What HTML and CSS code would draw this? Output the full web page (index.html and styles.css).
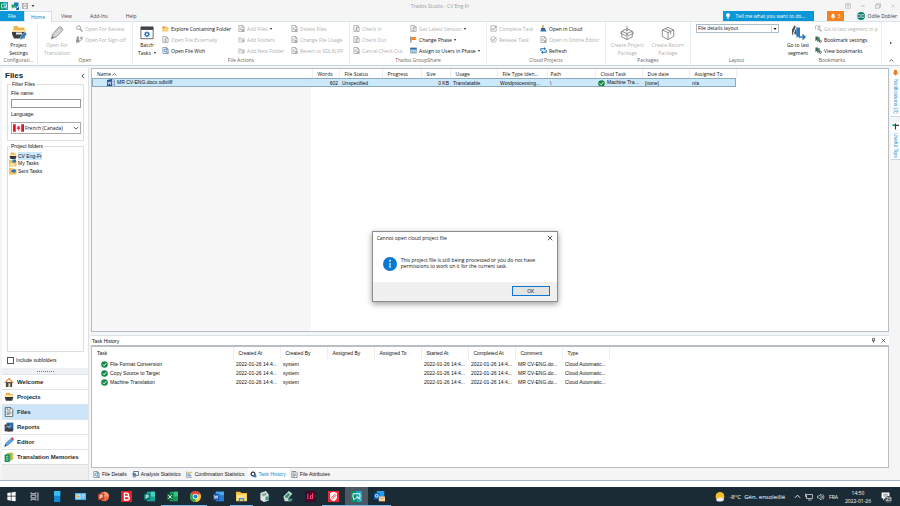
FILE: index.html
```html
<!DOCTYPE html>
<html lang="en">
<head>
<meta charset="utf-8">
<title>Trados Studio - CV Eng-Fr</title>
<link rel="stylesheet" href="styles.css">
</head>
<body>
<svg class="defs" aria-hidden="true">
  <symbol id="doc" viewBox="0 0 16 16"><path d="M2 1h8l4 4v10H2zM10 1v4h4" fill="#fafafa" stroke="currentColor" stroke-width="1.5"/><path d="M4 7h5M4 10h4" stroke="currentColor" stroke-width="1.4"/><path d="M8 12h6M11 9v6" stroke="currentColor" stroke-width="2"/></symbol>
  <symbol id="doc-x" viewBox="0 0 16 16"><path d="M2 1h8l4 4v10H2zM10 1v4h4" fill="#fafafa" stroke="currentColor" stroke-width="1.5"/><path d="M4 7h5M4 10h3" stroke="currentColor" stroke-width="1.4"/><path d="M8 9l6 6M14 9l-6 6" stroke="currentColor" stroke-width="2"/></symbol>
  <symbol id="doc-arrow" viewBox="0 0 16 16"><path d="M2 1h8l4 4v10H2zM10 1v4h4" fill="#fafafa" stroke="currentColor" stroke-width="1.5"/><path d="M8 12V6M5 8l3-3 3 3M5 12h6" stroke="currentColor" stroke-width="1.6" fill="none"/></symbol>
  <symbol id="doc-search" viewBox="0 0 16 16"><path d="M2 1h8l4 4v10H2zM10 1v4h4" fill="#fff" stroke="#687078" stroke-width="1.5"/><circle cx="8" cy="8" r="3.4" fill="#d8ebfa" stroke="#2679c4" stroke-width="1.7"/><path d="M10 11l4 4" stroke="#2679c4" stroke-width="2"/></symbol>
  <symbol id="folder" viewBox="0 0 16 16"><path d="M1 3h5l2 2h6v9H1z" fill="#e2a63a"/><path d="M1 14l3-7h12l-3 7z" fill="#ffd173"/></symbol>
  <symbol id="folder-off" viewBox="0 0 16 16"><path d="M1 3h5l2 2h6v9H1z" fill="#ccc"/><path d="M1 14l3-7h12l-3 7z" fill="#eee" stroke="#aaa"/><path d="M9 11h6M12 8v6" stroke="#888" stroke-width="1.5"/></symbol>
  <symbol id="magnifier" viewBox="0 0 16 16"><circle cx="6" cy="6" r="4.5" fill="none" stroke="currentColor" stroke-width="1.8"/><path d="M9 9l6 6" stroke="currentColor" stroke-width="2.6"/></symbol>
  <symbol id="signoff" viewBox="0 0 16 16"><circle cx="4" cy="4" r="3" fill="currentColor"/><path d="M0 15V10q0-3 4-3t4 3v5z" fill="currentColor"/><path d="M9 3h7M9 6h6M10 12l5-6" stroke="currentColor" stroke-width="1.8"/></symbol>
  <symbol id="check-box" viewBox="0 0 16 16"><path d="M2 2h12v12H2z" fill="none" stroke="currentColor" stroke-width="1.5"/><path d="M4 7l3 4 8-9" fill="none" stroke="currentColor" stroke-width="2"/></symbol>
  <symbol id="check-circle" viewBox="0 0 16 16"><circle cx="8" cy="8" r="6.5" fill="none" stroke="currentColor" stroke-width="1.4"/><path d="M4 7l3 4 6-7" fill="none" stroke="currentColor" stroke-width="2"/></symbol>
  <symbol id="ok" viewBox="0 0 16 16"><circle cx="8" cy="8" r="7.5" fill="#138744"/><path d="M4 8l3 3 5-6" fill="none" stroke="#fff" stroke-width="2.2"/></symbol>
  <symbol id="flag" viewBox="0 0 16 16"><path d="M2 1v14" stroke="#555" stroke-width="2"/><path d="M3 2h12l-3 3 3 4H3z" fill="#f5821f"/></symbol>
  <symbol id="phase" viewBox="0 0 16 16"><path d="M1 2h14v12H1z" fill="#dcebf7" stroke="#4b6f92"/><path d="M1 2h14v4H1z" fill="#2a6db0"/><path d="M3 9h4M9 9h4M3 12h10" stroke="#477da8" stroke-width="1.5"/></symbol>
  <symbol id="cloud-user" viewBox="0 0 16 16"><circle cx="7" cy="3" r="2.5" fill="#e8a62c"/><path d="M2 8q0-2 5-2t5 2v3H2z" fill="#3f4a57"/><path d="M1 15q-1-4 3-4 2-3 5-1 4-1 6 5z" fill="#2673bd"/></symbol>
  <symbol id="refresh" viewBox="0 0 16 16"><path d="M2 9V4h9M14 7v5H5" fill="none" stroke="#2577bf" stroke-width="2.5"/><path d="M9 0l5 4-5 4zM7 8l-5 4 5 4z" fill="#2577bf"/></symbol>
  <symbol id="project" viewBox="0 0 32 32"><path d="M5 2h8l2 3h12v8H5z" fill="#f0b64b"/><path d="M2 10h28v4H2z" fill="#ffe0a0"/><path d="M2 14h28v4l-3 9H6l-4-9z" fill="#3c4043"/><path d="M10 15h12v4H10z" fill="#eee"/><path d="M18 30l1-6 9-10 4 4-9 10z" fill="#2577bf" stroke="#fff"/></symbol>
  <symbol id="pencil" viewBox="0 0 32 32"><path d="M3 29l3-11L20 3q3-3 7 1t1 7L14 25z" fill="#bbb" stroke="#888" stroke-width="2"/><path d="M9 20L23 7M12 23L26 9" stroke="#eee" stroke-width="2"/><path d="M3 29l2-6 4 4z" fill="#666"/></symbol>
  <symbol id="batch" viewBox="0 0 32 32"><path d="M2 2h28v27H2z" fill="#fff" stroke="#55585c" stroke-width="2"/><path d="M2 2h28v7H2z" fill="#414448"/><circle cx="16" cy="19" r="4" fill="none" stroke="#2670b8" stroke-width="3"/><path d="M16 12v3M16 23v3M9 19h3M20 19h3M11 14l2 2M19 22l2 2M21 14l-2 2M13 22l-2 2" stroke="#2670b8" stroke-width="2"/></symbol>
  <symbol id="package" viewBox="0 0 32 32"><path d="M4 12l12 5 12-5v13l-12 6-12-6zM16 17v14M4 12l12-6 12 6" fill="none" stroke="#777" stroke-width="2.2"/><path d="M4 12l-3 5 12 5 3-5 3 5 12-5-3-5M16 0v11M11 7l5 5 5-5" fill="none" stroke="#777" stroke-width="2"/></symbol>
  <symbol id="package-return" viewBox="0 0 32 32"><path d="M3 9l13-6 13 6v15l-13 7-13-7zM3 9l13 6 13-6M16 15v16M9 6l13 6v7" fill="none" stroke="#777" stroke-width="2.2"/></symbol>
  <symbol id="goto" viewBox="0 0 32 32"><path d="M4 21V9l5-8 4 3v17l-4-4z" fill="#4b5055"/><path d="M6 19L13 2" stroke="#fff" stroke-width="2"/><path d="M13 5h7v22l-4-4-3 3z" fill="#2778bd"/><path d="M20 24h10M25 19l5 5-5 5" fill="none" stroke="#2778bd" stroke-width="3"/></symbol>
  <symbol id="bookmark" viewBox="0 0 16 16"><path d="M1 1h6v11l-3-3-3 3z" fill="#555"/><path d="M5 3h6v11l-3-3-3 3z" fill="#2b9860"/><circle cx="12" cy="12" r="2.5" fill="none" stroke="#47525b" stroke-width="2"/></symbol>
  <symbol id="bookmark-off" viewBox="0 0 16 16"><path d="M1 10V3l3-2 3 3v8M7 2h4v9l-3-2M10 13h5M13 11l2 2-2 2" fill="none" stroke="#888" stroke-width="1.7"/></symbol>
  <symbol id="studio" viewBox="0 0 16 16"><path d="M0 0h16v16H0z" fill="#078f65"/><path d="M7 0h9v16H9z" fill="#17a7bf"/><path d="M3 4h10v6H7l-3 3v-3H3zM8 7l6 6" fill="none" stroke="#fff" stroke-width="1.4"/></symbol>
  <symbol id="chat" viewBox="0 0 16 16"><path d="M6 1h9v8h-3l-2 3V9H6z" fill="#1878be"/><path d="M1 5h8v6H5l-2 3v-3H1z" fill="#22a36a"/><path d="M9 10l5 5M10 15h5v-5" stroke="#1267aa" stroke-width="2"/></symbol>
  <symbol id="save" viewBox="0 0 16 16"><path d="M1 1h14v14H1z" fill="#ddd" stroke="#888" stroke-width="1.8"/><path d="M4 1h8v5H4zM4 9h8v6H4z" fill="#fff" stroke="#888"/></symbol>
  <symbol id="bell" viewBox="0 0 16 16"><path d="M2 12q2-2 2-6 0-4 4-5 4 1 4 5 0 4 2 6z" fill="currentColor"/><circle cx="8" cy="13" r="2" fill="currentColor"/></symbol>
  <symbol id="bulb" viewBox="0 0 16 16"><path d="M5 11Q2 8 3 4q2-4 5-4t5 4q1 4-2 7z" fill="#fff"/><path d="M6 12h4v3H6z" fill="#fff"/></symbol>
  <symbol id="canada" viewBox="0 0 24 16"><path d="M0 0h24v16H0z" fill="#fff"/><path d="M0 0h6v16H0zM18 0h6v16h-6zM12 2l1 3 2-1-1 3 2 1-3 3h-2L8 8l2-1-1-3 2 1zM11.500 10h1v4h-1z" fill="#ee1020"/></symbol>
  <symbol id="word" viewBox="0 0 16 16"><path d="M6 2h9v12H6z" fill="#fff" stroke="#2d5da8"/><path d="M9 5h5M9 8h5M9 11h5" stroke="#2d5da8"/><path d="M0 2l10-2v16L0 14z" fill="#2455a0"/><path d="M2 5l1 6 2-5 2 5 1-6" fill="none" stroke="#fff" stroke-width="1.3"/></symbol>
  <symbol id="pfolder" viewBox="0 0 16 16"><path d="M3 1h6l1 2h4v4H3z" fill="#eeb347"/><path d="M1 5h14v3H1z" fill="#ffe3a3"/><path d="M1 8h14l-2 6H3z" fill="#33373b"/></symbol>
  <symbol id="mytask" viewBox="0 0 16 16"><path d="M0 2h6l2 2h7v11H0z" fill="#f6c15d"/><path d="M7 1h7v6H9L7 9z" fill="#2678c0"/><path d="M3 9h8v4H3z" fill="#fff0c8"/></symbol>
  <symbol id="sent" viewBox="0 0 16 16"><path d="M0 2h6l2 2h7v11H0z" fill="#f6c15d"/><path d="M5 11V6h4V3l6 5-6 5v-3H7z" fill="#2678c0"/></symbol>
  <symbol id="home" viewBox="0 0 16 16"><path d="M3 8h10v8H3z" fill="#454a50"/><path d="M7 10h3v6H7z" fill="#f6d28a"/><path d="M0 9l8-8 8 8-2 1-6-6-6 6z" fill="#ed8a3c"/></symbol>
  <symbol id="file" viewBox="0 0 16 16"><path d="M2 1h9l3 3v11H2z" fill="#fff" stroke="#3f4b55" stroke-width="1.3"/><path d="M5 1v4h5V1M4 8h8M4 10h8M4 12h5" fill="none" stroke="#3f4b55"/></symbol>
  <symbol id="report" viewBox="0 0 16 16"><path d="M4 1h11v13H4z" fill="#2868a6"/><path d="M1 4h8v11H1z" fill="#3c4249"/><path d="M3 9l3-3 2 3 3-4" fill="none" stroke="#9cd0ff" stroke-width="1.6"/><path d="M5 15l9-6v6z" fill="#34373b"/></symbol>
  <symbol id="editor" viewBox="0 0 16 16"><path d="M1 15l2-5 9-8 3 3-9 8z" fill="#65a7da" stroke="#256baa"/><path d="M11 2l2-2 3 3-2 2z" fill="#df3e3a"/><path d="M1 15l1-3 2 2z" fill="#333"/></symbol>
  <symbol id="memory" viewBox="0 0 16 16"><path d="M7 1h8v11H7z" fill="#eebb45"/><path d="M4 2h8v12H4z" fill="#79bf66"/><path d="M1 4h8v12H1z" fill="#128a4e"/><path d="M3 7h4M3 10h4M3 13h4" stroke="#fff"/></symbol>
  <symbol id="stats" viewBox="0 0 16 16"><path d="M4 1h11v9H4z" fill="#fff" stroke="#435c7c" stroke-width="2"/><path d="M1 5h8v3H1zM2 8h2v7H2zM6 8h2v7H6z" fill="#3b6fa8"/></symbol>
  <symbol id="bars" viewBox="0 0 16 16"><path d="M1 1v14h13" fill="none" stroke="#56616d"/><path d="M3 3h11" stroke="#eba93c" stroke-width="2"/><path d="M3 7h7M3 11h9" stroke="#3b75aa" stroke-width="2"/></symbol>
  <symbol id="gear" viewBox="0 0 16 16"><circle cx="7" cy="7" r="4" fill="none" stroke="#333b43" stroke-width="2.5"/><path d="M7 0v3M7 11v3M0 7h3M11 7h3M2 2l2 2M12 2l-2 2M2 12l2-2" stroke="#333b43" stroke-width="2"/><circle cx="12" cy="12" r="3" fill="#2a7dc0"/></symbol>
  <symbol id="signpost" viewBox="0 0 16 16"><path d="M8 1v14" stroke="#333" stroke-width="2.500"/><path d="M1 3h7v4H1z" fill="#259456"/><path d="M7 4h9v3H7z" fill="#39424a"/></symbol>
  <symbol id="chevron" viewBox="0 0 16 16"><path d="M2 5l6 6 6-6" fill="none" stroke="currentColor" stroke-width="1.8"/></symbol>
  <symbol id="up" viewBox="0 0 16 16"><path d="M2 11l6-6 6 6" fill="none" stroke="currentColor" stroke-width="2"/></symbol>
  <symbol id="left" viewBox="0 0 16 16"><path d="M11 2L5 8l6 6" fill="none" stroke="currentColor" stroke-width="2"/></symbol>
  <symbol id="down" viewBox="0 0 16 16"><path d="M2 4h12l-6 8z" fill="currentColor"/></symbol>
  <symbol id="close" viewBox="0 0 16 16"><path d="M2 2l12 12M14 2L2 14" stroke="currentColor" stroke-width="1.800"/></symbol>
  <symbol id="pin" viewBox="0 0 16 16"><path d="M4 2h8M5 2v7M11 2v7M3 9h10M8 9v6" stroke="currentColor" stroke-width="1.800"/></symbol>
</svg>

<header class="titlebar">
  <div class="quick"><svg class="i8"><use href="#studio"/></svg><svg class="i8"><use href="#chat"/></svg><svg class="i6"><use href="#save"/></svg><svg class="i4"><use href="#down"/></svg></div>
  <div class="title">Trados Studio - CV Eng-Fr</div>
  <div class="wincontrols">
    <button aria-label="Ribbon options"><svg class="i6" viewBox="0 0 16 16"><path d="M1 2h14v12H1zM1 5h14M8 12V7M6 9l2-2 2 2" fill="none" stroke="#aaa" stroke-width="1.500"/></svg></button>
    <button aria-label="Minimize"><svg class="i4" viewBox="0 0 16 16"><path d="M1 8h14" stroke="#aaa" stroke-width="3"/></svg></button>
    <button aria-label="Restore"><svg class="i6" viewBox="0 0 16 16"><path d="M1 5h10v9H1zM4 5V2h11v9h-4" fill="none" stroke="#aaa" stroke-width="1.800"/></svg></button>
    <button aria-label="Close"><svg class="i4"><use href="#close"/></svg></button>
  </div>
</header>

<nav class="tabs">
  <a class="tab file" href="#file">File</a><a class="tab home" href="#home-tab">Home</a><a class="tab" href="#view">View</a><a class="tab" href="#addins">Add-Ins</a><a class="tab" href="#help">Help</a>
  <div class="tabs-right">
    <button class="tellme"><svg class="i6"><use href="#bulb"/></svg>Tell me what you want to do...</button>
    <button class="alerts"><svg class="i6"><use href="#bell"/></svg>3</button>
    <span class="avatar">OD</span><span>Odile Dobler</span>
  </div>
</nav>

<section class="ribbon">
  <div class="group">
    <div class="tools"><button class="big"><svg class="i16"><use href="#project"/></svg>Project<br>Settings</button></div>
    <div class="label">Configurati...</div>
  </div>
  <div class="group">
    <div class="tools">
      <button class="big off wide" disabled><svg class="i14"><use href="#pencil"/></svg>Open For<br>Translation</button>
      <div class="stack"><button class="off" disabled><svg><use href="#magnifier"/></svg>Open For Review</button><button class="off" disabled><svg><use href="#signoff"/></svg>Open For Sign-off</button></div>
    </div>
    <div class="label">Open</div>
  </div>
  <div class="group">
    <div class="tools">
      <button class="big"><svg class="i14"><use href="#batch"/></svg>Batch<br>Tasks <i class="caret"></i></button>
      <div class="stack s76"><button><svg><use href="#folder"/></svg>Explore Containing Folder</button><button class="off" disabled><svg><use href="#doc-arrow"/></svg>Open File Externally</button><button><svg><use href="#doc-search"/></svg>Open File With</button></div>
      <div class="stack s53"><button class="off" disabled><svg><use href="#doc"/></svg>Add Files <i class="caret"></i></button><button class="off" disabled><svg><use href="#folder-off"/></svg>Add Folders</button><button class="off" disabled><svg><use href="#folder-off"/></svg>Add New Folder</button></div>
      <div class="stack"><button class="off" disabled><svg><use href="#doc-x"/></svg>Delete Files</button><button class="off" disabled><svg><use href="#doc"/></svg>Change File Usage</button><button class="off" disabled><svg><use href="#doc-x"/></svg>Revert to SDLXLIFF</button></div>
    </div>
    <div class="label">File Actions</div>
  </div>
  <div class="group">
    <div class="tools">
      <div class="stack s56"><button class="off" disabled><svg><use href="#doc-arrow"/></svg>Check In</button><button class="off" disabled><svg><use href="#doc-arrow"/></svg>Check Out</button><button class="off" disabled><svg><use href="#doc-x"/></svg>Cancel Check Out</button></div>
      <div class="stack"><button class="off" disabled><svg><use href="#doc-arrow"/></svg>Get Latest Version <i class="caret"></i></button><button><svg><use href="#flag"/></svg>Change Phase <i class="caret"></i></button><button><svg><use href="#phase"/></svg>Assign to Users in Phase <i class="caret"></i></button></div>
    </div>
    <div class="label">Trados GroupShare</div>
  </div>
  <div class="group">
    <div class="tools">
      <div class="stack s49"><button class="off" disabled><svg><use href="#check-box"/></svg>Complete Task</button><button class="off" disabled><svg><use href="#check-circle"/></svg>Release Task</button></div>
      <div class="stack"><button><svg><use href="#cloud-user"/></svg>Open in Cloud</button><button class="off" disabled><svg><use href="#doc-x"/></svg>Open in Online Editor</button><button><svg><use href="#refresh"/></svg>Refresh</button></div>
    </div>
    <div class="label">Cloud Projects</div>
  </div>
  <div class="group">
    <div class="tools even">
      <button class="big off" disabled><svg class="i14"><use href="#package"/></svg>Create Project<br>Package</button>
      <button class="big off" disabled><svg class="i14"><use href="#package-return"/></svg>Create Return<br>Package</button>
    </div>
    <div class="label">Packages</div>
  </div>
  <div class="group borderless">
    <div class="tools"><div class="layout-select"><select aria-label="Layout"><option>File details layout</option></select><span><svg class="i4"><use href="#down"/></svg></span></div></div>
    <div class="label">Layout</div>
  </div>
  <div class="group">
    <div class="tools">
      <button class="big goto"><svg class="i16"><use href="#goto"/></svg>Go to last<br>segment</button>
      <div class="stack"><button class="off" disabled><svg><use href="#bookmark-off"/></svg>Go to last segment in p</button><button><svg><use href="#bookmark"/></svg>Bookmark settings</button><button><svg><use href="#bookmark"/></svg>View bookmarks</button></div>
    </div>
    <div class="label">Bookmarks</div>
  </div>
  <div class="ribbon-end"><i class="caret side"></i><svg class="i5"><use href="#up"/></svg></div>
</section>

<main class="workspace">
  <aside class="sidebar">
    <div class="side-title"><h1>Files</h1><svg class="i6"><use href="#left"/></svg></div>
    <fieldset class="filter"><legend>Filter Files</legend>
      <label for="fname">File name:</label><input id="fname" type="text">
      <label for="lang">Language:</label>
      <div class="lang"><svg class="canada"><use href="#canada"/></svg><select id="lang"><option>French (Canada)</option></select><svg class="i6"><use href="#chevron"/></svg></div>
    </fieldset>
    <fieldset class="folders"><legend>Project folders</legend>
      <ul><li><svg class="i8"><use href="#pfolder"/></svg><span class="picked">CV Eng-Fr</span></li><li><svg class="i8"><use href="#mytask"/></svg><span>My Tasks</span></li><li><svg class="i8"><use href="#sent"/></svg><span>Sent Tasks</span></li></ul>
    </fieldset>
    <label class="subfolders"><input type="checkbox">Include subfolders</label>
    <div class="splitter"><i></i></div>
    <nav class="views">
      <a href="#welcome"><svg class="i10"><use href="#home"/></svg>Welcome</a>
      <a href="#projects"><svg class="i10"><use href="#pfolder"/></svg>Projects</a>
      <a class="active" href="#files"><svg class="i10"><use href="#file"/></svg>Files</a>
      <a href="#reports"><svg class="i10"><use href="#report"/></svg>Reports</a>
      <a href="#editor-view"><svg class="i10"><use href="#editor"/></svg>Editor</a>
      <a href="#memories"><svg class="i10"><use href="#memory"/></svg>Translation Memories</a>
    </nav>
    <div class="side-foot"></div>
  </aside>

  <div class="center">
    <section class="files">
      <table>
        <colgroup><col class="c-name"><col class="c-words"><col class="c-43"><col class="c-39"><col class="c-29"><col class="c-47"><col class="c-50"><col class="c-48"><col class="c-47"><col class="c-47"><col class="c-47"></colgroup>
        <thead><tr><th>Name <svg class="i5"><use href="#up"/></svg></th><th class="num">Words</th><th>File Status</th><th>Progress</th><th>Size</th><th>Usage</th><th>File Type Iden...</th><th class="tight">Path</th><th>Cloud Task</th><th>Due date</th><th>Assigned To</th></tr></thead>
        <tbody><tr><td class="name"><svg class="i8"><use href="#word"/></svg>MR CV-ENG.docx.sdlxliff</td><td class="num">602</td><td>Unspecified</td><td></td><td class="num">0 KB</td><td>Translatable</td><td>Wordprocessing...</td><td>\</td><td><svg class="i7"><use href="#ok"/></svg>Machine Tra...</td><td>[none]</td><td>n/a</td></tr></tbody>
      </table>
    </section>
    <div class="history-title"><span>Task History</span><svg class="i5"><use href="#pin"/></svg><svg class="i5"><use href="#close"/></svg></div>
    <section class="history">
      <table>
        <colgroup><col class="h-task"><col span="8" class="h-rest"></colgroup>
        <thead><tr><th>Task</th><th>Created At</th><th>Created By</th><th>Assigned By</th><th>Assigned To</th><th>Started At</th><th>Completed At</th><th>Comment</th><th>Type</th></tr></thead>
        <tbody>
          <tr><td class="name"><svg class="i7"><use href="#ok"/></svg>File Format Conversion</td><td>2022-01-26 14:4...</td><td>system</td><td></td><td></td><td>2022-01-26 14:4...</td><td>2022-01-26 14:4...</td><td>MR CV-ENG.do...</td><td>Cloud Automatic...</td></tr>
          <tr><td class="name"><svg class="i7"><use href="#ok"/></svg>Copy Source to Target</td><td>2022-01-26 14:4...</td><td>system</td><td></td><td></td><td>2022-01-26 14:4...</td><td>2022-01-26 14:4...</td><td>MR CV-ENG.do...</td><td>Cloud Automatic...</td></tr>
          <tr><td class="name"><svg class="i7"><use href="#ok"/></svg>Machine Translation</td><td>2022-01-26 14:4...</td><td>system</td><td></td><td></td><td>2022-01-26 14:4...</td><td>2022-01-26 14:4...</td><td>MR CV-ENG.do...</td><td>Cloud Automatic...</td></tr>
        </tbody>
      </table>
    </section>
    <nav class="bottom-tabs">
      <a href="#details"><svg class="i7"><use href="#doc-search"/></svg>File Details</a><a href="#analysis"><svg class="i7"><use href="#stats"/></svg>Analysis Statistics</a><a href="#confirm"><svg class="i7"><use href="#bars"/></svg>Confirmation Statistics</a><a class="active" href="#history"><svg class="i7"><use href="#gear"/></svg>Task History</a><a href="#attributes"><svg class="i7"><use href="#file"/></svg>File Attributes</a>
    </nav>
  </div>

  <aside class="rail">
    <button><svg class="i7 orange"><use href="#bell"/></svg><span>Notifications (3)</span></button>
    <button><svg class="i7"><use href="#signpost"/></svg><span>Useful Tips</span></button>
  </aside>
</main>
<div class="status"></div>

<footer class="taskbar">
  <button aria-label="Start"><svg viewBox="0 0 16 16"><path d="M2 3l5-1v5H2zM8 2l6-1v6H8zM2 8h5v6l-5-1zM8 8h6v7l-6-1z" fill="#fff"/></svg></button>
  <button aria-label="Task view"><svg viewBox="0 0 16 16"><path d="M3 2v2h7V2M3 6h7v4H3zM3 14v-2h7v2M13 2v12" fill="none" stroke="#ddd" stroke-width="1.300"/></svg></button>
  <button aria-label="Phone"><svg viewBox="0 0 16 16"><path d="M3 0h9v16H3z" fill="#168ad6"/><path d="M3 0h9v7H3z" fill="#35c0f1"/></svg></button>
  <button aria-label="Monitor"><svg viewBox="0 0 16 16"><path d="M0 3h16v10H0z" fill="#58bdf1"/><path d="M2 5h6v6H2z" fill="#d8f1ff"/><circle cx="5" cy="8" r="2" fill="#f4a52c"/><path d="M10 6h4M10 9h4" stroke="#fff"/></svg></button>
  <button aria-label="PowerPoint"><svg viewBox="0 0 16 16"><circle cx="9" cy="8" r="7" fill="#ef6f47"/><path d="M9 1a7 7 0 0 1 7 7H9z" fill="#ff9a75"/><path d="M0 4h9v9H0z" fill="#c63f22"/><path d="M3 11V6h3v3H3" fill="none" stroke="#fff" stroke-width="1.300"/></svg></button>
  <button aria-label="Bitdefender"><svg viewBox="0 0 16 16"><path d="M0 0h16v16H0z" fill="#ee1c25"/><path d="M5 3v10h4q3 0 3-3 0-2-2-2 1-1 1-2 0-3-3-3zM5 8h5" fill="none" stroke="#fff" stroke-width="2"/></svg></button>
  <button aria-label="Publisher"><svg viewBox="0 0 16 16"><path d="M4 1h12v14H4z" fill="#1ba493"/><path d="M10 1h6v7h-6z" fill="#45d2bd"/><path d="M0 4h9v9H0z" fill="#04766d"/><path d="M3 11V6h3v3H3" fill="none" stroke="#fff" stroke-width="1.300"/></svg></button>
  <button class="run" aria-label="Excel"><svg viewBox="0 0 16 16"><path d="M4 1h12v14H4z" fill="#179a58"/><path d="M10 1h6v7h-6z" fill="#35c481"/><path d="M0 4h9v9H0z" fill="#0b713e"/><path d="M2 6l5 5M7 6l-5 5" stroke="#fff" stroke-width="1.400"/></svg></button>
  <button class="run" aria-label="Chrome"><svg viewBox="0 0 16 16"><circle cx="8" cy="8" r="8" fill="#f6c72c"/><path d="M8 8L1 4a8 8 0 0 1 14 0z" fill="#e74435"/><path d="M8 8v8A8 8 0 0 1 1 4z" fill="#2ca852"/><circle cx="8" cy="8" r="4" fill="#fff"/><circle cx="8" cy="8" r="3" fill="#2879df"/></svg></button>
  <button aria-label="Word"><svg viewBox="0 0 16 16"><path d="M4 1h12v14H4z" fill="#267bd4"/><path d="M4 1h12v5H4z" fill="#49aaf0"/><path d="M0 4h9v9H0z" fill="#1852a9"/><path d="M2 6l1 5 1.500-4L6 11l1-5" fill="none" stroke="#fff"/></svg></button>
  <button class="run" aria-label="Explorer"><svg viewBox="0 0 16 16"><path d="M0 1h6l2 2h8v12H0z" fill="#f4bd35"/><path d="M1 5h14v9H1z" fill="#ffe28b"/><path d="M4 10h8v5h-2v-3H6v3H4z" fill="#3690d5"/></svg></button>
  <button aria-label="Archive"><svg viewBox="0 0 16 16"><path d="M2 3l8-3 4 5v9l-7 2-5-3z" fill="#dfe7e5"/><path d="M3 5l6-3 3 3-6 3z" fill="#8fa8a0"/><path d="M10 8h5l-1 6-5-1z" fill="#4a9a83"/></svg></button>
  <button aria-label="Archive tools"><svg viewBox="0 0 16 16"><path d="M2 8l8-8 5 4-6 7 5 4H4z" fill="#c5ddd5"/><path d="M4 8l5-5 3 2-5 6zM9 11h6v3H9z" fill="#34916e"/></svg></button>
  <button aria-label="InDesign"><svg viewBox="0 0 16 16"><path d="M0 0h16v16H0z" fill="#4a0424"/><path d="M4 4v8M11 3v8H8V7h3" fill="none" stroke="#ff3c79" stroke-width="1.600"/></svg></button>
  <button class="run" aria-label="Antivirus"><svg viewBox="0 0 16 16"><path d="M0 0h16v16H0z" fill="#ee2635"/><path d="M3 3l5-2 5 2v6q0 4-5 6-5-2-5-6z" fill="#fff"/><path d="M5 10l6-6M6 12l6-6" stroke="#ee2635" stroke-width="1.300"/></svg></button>
  <button class="run current" aria-label="Trados Studio"><svg><use href="#studio"/></svg></button>
  <button class="run" aria-label="Outlook"><svg viewBox="0 0 16 16"><path d="M4 0h11v10H4z" fill="#269be9"/><path d="M0 3h8v9H0z" fill="#0868b9"/><circle cx="4" cy="7" r="2" fill="none" stroke="#fff" stroke-width="1.300"/><path d="M7 8h9v7H7z" fill="#ffd498"/><path d="M7 8l5 4 4-4" fill="none" stroke="#c98225"/></svg></button>
  <div class="tray">
    <svg viewBox="0 0 16 16"><circle cx="8" cy="7" r="7" fill="#f9bd28"/><path d="M2 13q0-4 4-3 1-3 5-1 4 1 3 4-2 3-7 2-4 0-5-2z" fill="#e9edf0"/></svg>
    <span class="weather">-8°C&nbsp; Gén. ensoleillé</span>
    <svg class="i7"><use href="#up"/></svg>
    <svg class="i8" viewBox="0 0 16 16"><path d="M3 3h12v8H3zM6 14h7M1 1v6h3" fill="none" stroke="#ddd" stroke-width="1.500"/></svg>
    <svg class="i8" viewBox="0 0 16 16"><path d="M1 6h3l4-4v12l-4-4H1zM10 5q2 3 0 6M12 3q4 5 0 10" fill="none" stroke="#ddd" stroke-width="1.300"/></svg>
    <span>FRA</span>
    <span class="clock">14:50<br>2022-01-26</span>
    <span class="notes"><svg viewBox="0 0 16 16"><path d="M1 1h14v10H7l-3 4v-4H1z" fill="#fff"/><path d="M4 4h8M4 7h8" stroke="#26323b"/></svg><b>23</b></span>
  </div>
</footer>

<div class="dialog" role="dialog" aria-labelledby="dlg-title">
  <div class="dialog-title"><span id="dlg-title">Cannot open cloud project file</span><button aria-label="Close"><svg class="i6"><use href="#close"/></svg></button></div>
  <div class="dialog-body"><svg viewBox="0 0 32 32"><circle cx="16" cy="16" r="16" fill="#0878d4"/><path d="M16 13v12" stroke="#fff" stroke-width="2.500"/><circle cx="16" cy="8.500" r="2" fill="#fff"/></svg><p>This project file is still being processed or you do not have permissions to work on it for the current task.</p></div>
  <div class="dialog-foot"><button>OK</button></div>
</div>
</body>
</html>
```
FILE: styles.css
```css
* { box-sizing: border-box; }
body { margin: 0; height: 100vh; display: flex; flex-direction: column; overflow: hidden; position: relative; background: #f5f5f5; color: #111; font: 5px/8px "Open Sans", "Noto Sans", sans-serif; }
button, input, select { font: inherit; color: inherit; padding: 0; border: 0; border-radius: 0; background: none; margin: 0; }
a { color: inherit; text-decoration: none; }
svg { flex: none; display: block; }
.defs { position: absolute; width: 0; height: 0; }
.i4 { width: 4px; height: 4px; }
.i5 { width: 5px; height: 5px; }
.i6 { width: 6px; height: 6px; }
.i7 { width: 7px; height: 7px; }
.i8 { width: 8px; height: 8px; }
.i10 { width: 10px; height: 10px; }
.i14 { width: 14px; height: 14px; }
.i16 { width: 16px; height: 16px; }
.caret { display: inline-block; border: 1px solid transparent; border-top: 2px solid #222; border-bottom: 0; margin-left: 2px; vertical-align: 1px; }
.caret.side { border: 1px solid transparent; border-left: 2px solid #222; border-right: 0; margin: 0; }

.titlebar { height: 11px; flex: none; display: grid; grid-template-columns: 1fr auto 1fr; align-items: center; color: #999; }
.quick { display: flex; align-items: center; gap: 3px; color: #444; }
.title { padding-right: 20px; }
.wincontrols { display: flex; justify-content: flex-end; gap: 10px; padding-right: 5px; align-items: center; color: #aaa; }

.tabs { height: 11px; flex: none; display: flex; align-items: stretch; border-bottom: 1px solid #dbe5ec; color: #444; }
.tab { padding: 0 9px; line-height: 11px; }
.tab.file { background: #0a96d7; color: #fff; padding: 0 8px; }
.tab.home { background: #fff; color: #1979bd; border: 1px solid #d5e1e8; border-bottom: 0; padding: 0 6px; line-height: 10px; margin-bottom: -1px; }
.tabs-right { margin-left: auto; display: flex; align-items: center; padding-right: 3px; color: #333; }
.tellme { background: #0a96d7; color: #fff; height: 10px; width: 91px; display: flex; align-items: center; gap: 5px; padding-left: 2px; margin-right: 13px; }
.alerts { background: #f58220; color: #fff; height: 10px; width: 17px; display: flex; align-items: center; justify-content: center; gap: 2px; margin-right: 13px; }
.avatar { width: 8px; height: 8px; border-radius: 50%; background: #087f73; color: #fff; text-align: center; line-height: 8px; margin-right: 3px; }

.ribbon { height: 44px; flex: none; display: grid; grid-template-columns: 38fr 95fr 217fr 137fr 119fr 85fr 92fr 99fr 18fr; background: #fff; border-bottom: 1px solid #c9d6df; }
.group { min-width: 0; display: flex; flex-direction: column; border-right: 1px solid #e8eef2; overflow: hidden; }
.group.borderless { border-right-color: #fff; }
.tools { height: 34px; flex: none; display: flex; gap: 1px; padding: 1px 2px 0; }
.tools.even { justify-content: space-around; }
.label { text-align: center; color: #666; height: 8px; flex: none; white-space: nowrap; }
.big { min-width: 24px; line-height: 8px; display: block; height: 34px; padding-top: 1px; text-align: center; flex: none; margin-right: 1px; }
.group:first-child .big { min-width: 33px; }
.big.wide { min-width: 34px; margin-right: 0; }
.big svg { margin: 0 auto; height: 16px; }
.stack button { display: flex; align-items: center; height: 11px; white-space: nowrap; }
.stack svg { width: 7px; height: 7px; margin: 0 2px 0 1px; }
.stack { flex: none; }
.s76 { width: 75px; }
.s53 { width: 52px; }
.s56 { width: 56px; }
.s49 { width: 49px; }
.off { color: #b0b0b0; }
.off svg { color: #808080; opacity: .85; }
.layout-select { display: flex; width: 100%; height: 9px; margin: 1px 1px 0 3px; border: 1px solid #a8bccb; align-items: center; }
.layout-select select { appearance: none; flex: 1; min-width: 0; height: 7px; padding-left: 1px; line-height: 7px; }
.layout-select span { border-left: 1px solid #ccd7df; padding: 1px; }
.big.goto { min-width: 26px; margin-right: 2px; }
.ribbon-end { display: flex; flex-direction: column; justify-content: space-between; align-items: center; padding: 20px 0 2px; }

.workspace { flex: 1; min-height: 0; display: flex; gap: 2px; padding: 2px 0 0 2px; }
.sidebar { width: 87px; flex: none; display: flex; flex-direction: column; background: #fff; border-right: 1px solid #dde2e6; font-family: "Liberation Sans", sans-serif; }
.side-title { display: flex; justify-content: space-between; align-items: center; padding: 3px 2px 0 3px; height: 12px; }
h1 { font: bold 8px/10px "Liberation Sans", sans-serif; margin: 0; color: #16232e; }
fieldset { margin: 0 4px 0 5px; border: 1px solid #dedede; min-width: 0; padding: 0 2px 0 3px; }
legend { padding: 0 1px; line-height: 8px; }
.filter { height: 61px; padding-top: 1px; }
.filter label { display: block; line-height: 9px; }
.filter input { width: 100%; height: 9px; border: 1px solid #999; background: #fff; display: block; margin: 1px 0 2px; }
.lang { display: flex; align-items: center; gap: 1px; height: 12px; border: 1px solid #aaa; margin-top: 3px; padding: 0 1px; font-family: "Open Sans", sans-serif; }
.lang select { appearance: none; flex: 1; min-width: 0; }
.canada { width: 11px; height: 8px; }
.folders { flex: 1; margin-top: 1px; padding: 0 2px; }
ul { margin: 2px 0 0; padding: 0; list-style: none; }
li { display: flex; align-items: center; height: 8px; margin-left: -1px; gap: 1px; }
li:first-child { height: 7px; }
.picked { background: #cce8ff; }
.subfolders { display: flex; align-items: center; gap: 2px; height: 16px; margin-left: 5px; }
.subfolders input { appearance: none; width: 7px; height: 7px; border: 1px solid #555; background: #fff; }
.splitter { height: 6px; background: #eef1f3; display: grid; place-items: center; }
.splitter i { width: 17px; border-top: 1px dotted #777; }
.views a { display: flex; align-items: center; height: 15px; border-top: 1px solid #dfe4e8; padding-left: 2px; gap: 3px; font: bold 6px/8px "Liberation Sans", sans-serif; color: #202b36; }
.views a.active { background: #cce5f8; }
.side-foot { height: 16px; background: #f0f0f0; border-top: 1px solid #ddd; }

.center { flex: 1; min-width: 0; display: flex; flex-direction: column; font-family: "Liberation Sans", sans-serif; }
.files { flex: 265; min-height: 0; border: 1px solid #b9bec4; background: linear-gradient(90deg, #f7f7f7 0 27.5%, #fff 27.5%); }
table { border-collapse: collapse; table-layout: fixed; }
th, td { padding: 0 0 0 3px; text-align: left; font-weight: normal; white-space: nowrap; overflow: hidden; line-height: 8px; }
th { padding-left: 5px; border-right: 1px solid #eee; background: #fff; }
th svg, td svg { display: inline-block; vertical-align: middle; }
td svg { margin-right: 2px; }
.files table { width: 80.8%; }
.files th { height: 9px; font-family: "Open Sans", sans-serif; }
.files th.tight { padding-left: 3px; }
.files th.num { padding-right: 8px; }
.num { text-align: right; padding-right: 1px; }
.files tbody tr { background: #cce8fb; outline: 1px solid #8daabd; outline-offset: -1px; }
.files td { height: 9px; }
.files td.name { padding-left: 15px; }
.c-name { width: 220px; }
.c-words { width: 27px; }
.c-43 { width: 43px; }
.c-39 { width: 39px; }
.c-29 { width: 29px; }
.c-47 { width: 47px; }
.c-50 { width: 50px; }
.c-48 { width: 48px; }
.history-title { height: 10px; margin-top: 3px; flex: none; display: flex; align-items: center; gap: 5px; padding: 0 3px 0 1px; background: #fff; border-top: 1px solid #d9e4ea; }
.history-title span { flex: 1; }
.history { flex: 121; min-height: 0; border: 1px solid #b9bec4; border-top: 2px solid #b9bec4; background: #fff; }
.history table { width: 64.8%; }
.history th { height: 12px; }
.history td { height: 9px; }
.history td.name { padding-left: 9px; }
.h-task { width: 141px; }
.h-rest { width: 47px; }
.bottom-tabs { flex: none; height: 12px; display: flex; align-items: stretch; }
.bottom-tabs a { display: flex; align-items: center; gap: 2px; padding: 0 3px 0 2px; white-space: nowrap; }
.bottom-tabs .active { background: #fff; color: #168fd0; }

.rail { width: 9px; flex: none; display: flex; flex-direction: column; gap: 5px; font-family: "Liberation Sans", sans-serif; }
.rail button { width: 9px; display: flex; flex-direction: column; align-items: center; gap: 3px; padding: 1px 0 2px; color: #168fd0; background: #fff; border-bottom: 1px solid #ccd7df; }
.rail span { writing-mode: vertical-rl; line-height: 8px; }
.rail .orange { color: #f07a20; }

.status { height: 7px; flex: none; background: #fff; border-top: 1px solid #9fb3d5; }
.taskbar { height: 19px; flex: none; background: #1b2b36; display: flex; color: #fff; }
.taskbar > button { width: 23px; display: grid; place-items: center; border-bottom: 1px solid transparent; }
.taskbar > button svg { width: 11px; height: 11px; }
.taskbar > button.run { border-bottom-color: #76b9ed; }
.taskbar > button.current { background: #4a5963; }
.tray { margin-left: auto; display: flex; align-items: center; gap: 4px; padding-right: 10px; }
.tray > svg:first-child { width: 10px; height: 10px; }
.weather { font-size: 6px; margin-right: 5px; }
.clock { text-align: center; line-height: 8px; margin: 0 6px 0 3px; }
.notes { position: relative; }
.notes svg { width: 9px; height: 9px; }
.notes b { position: absolute; left: 4px; top: 4px; width: 7px; height: 7px; border-radius: 50%; background: #4a535a; font-weight: normal; line-height: 7px; text-align: center; }

.dialog { position: absolute; left: 41.3%; top: 231px; width: 186px; background: #fff; border: 1px solid #8c8c8c; box-shadow: 0 2px 6px rgba(0, 0, 0, .4); color: #111; }
.dialog-title { display: flex; justify-content: space-between; align-items: center; height: 12px; padding: 0 4px; }
.dialog-body { display: flex; gap: 4px; padding: 12px 10px 0; height: 38px; }
.dialog-body svg { width: 14px; height: 14px; margin-top: 1px; }
.dialog-body p { margin: 0; padding-top: 1px; line-height: 6px; }
.dialog-foot { height: 19px; background: #f0f0f0; display: flex; justify-content: flex-end; padding: 4px 7px; }
.dialog-foot button { width: 38px; height: 10px; border: 1px solid #0878d4; background: #e3e3e3; line-height: 8px; }
```
